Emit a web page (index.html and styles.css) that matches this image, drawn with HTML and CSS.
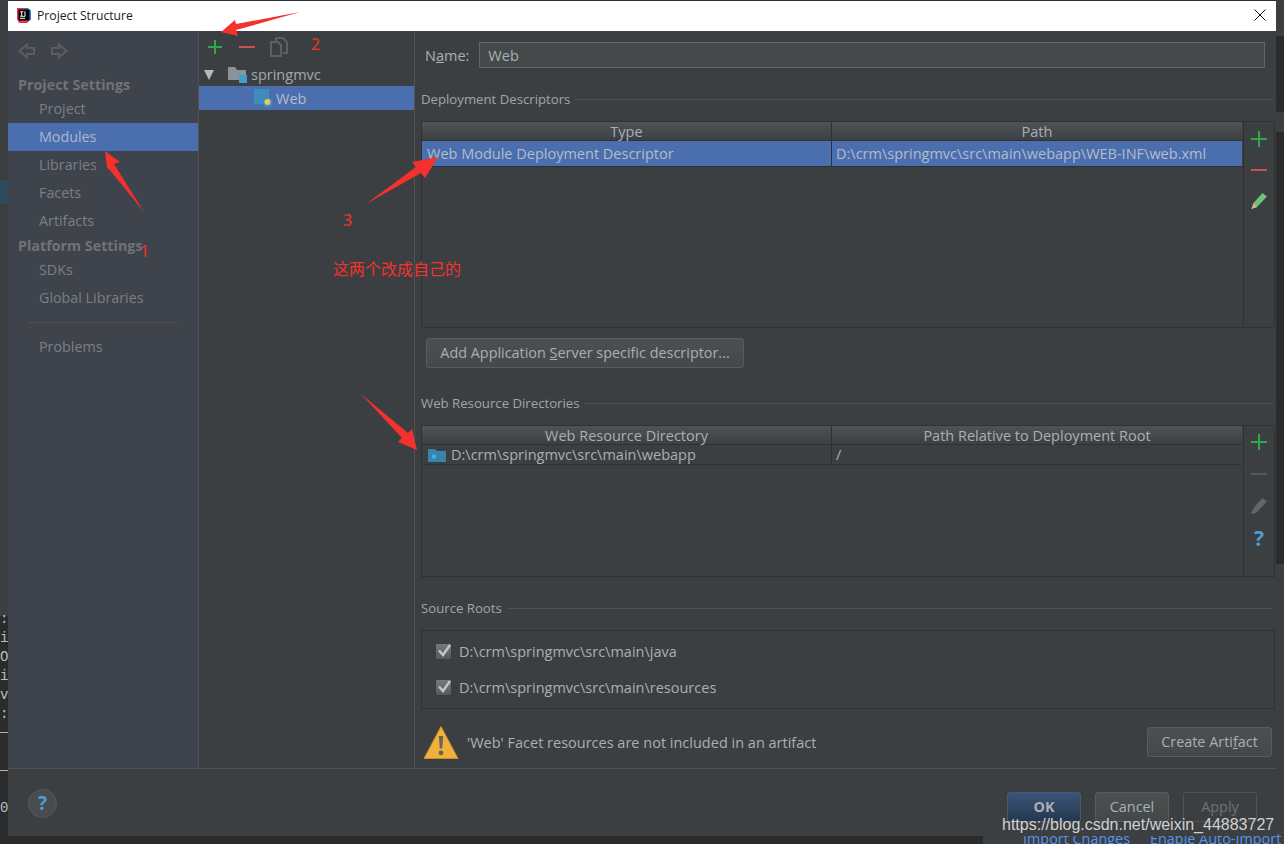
FILE: index.html
```html
<!DOCTYPE html>
<html lang="en">
<head>
<meta charset="utf-8">
<title>Project Structure</title>
<link rel="stylesheet" href="styles.css">
</head>
<body>
<div class="backdrop">
  <div class="strip left-top"></div>
  <div class="strip left-blue"></div>
  <div class="strip right-top"></div>
  <div class="strip right-mid"></div>
  <div class="strip right-low"></div>
  <div class="link-bar"></div>
  <div class="console"><span>:</span><span>i</span><span>O</span><span>i</span><span>v</span><span>:</span><span class="rule"></span><span class="rule second"></span><span class="zero">0</span></div>
  <div class="bg-links"><span>Import Changes</span><span>Enable Auto-Import</span></div>
</div>

<div class="dialog">
  <header class="titlebar">
    <svg class="app-logo" width="16" height="16" viewBox="0 0 16 16"><path d="M1 1h9l5 3v8l-4 4H3l-2-4z" fill="#e8304f"/><path d="M9 1h3l3 3v8l-3 2z" fill="#2b7fe0"/><rect x="2.5" y="2.5" width="11" height="11" fill="#000"/><rect x="4" y="10.8" width="5" height="1" fill="#fff"/><path d="M4.2 4.3h3v1h-1v3.500h1v1h-3v-1h1v-3.500h-1zM8.500 4.300h1v4.400c0 .8-.6 1.200-1.400 1.200h-.7v-1h.7c.3 0 .4-.1.400-.3z" fill="#fff"/></svg>
    <span class="title-text">Project Structure</span>
    <svg class="close-x" width="12" height="12" viewBox="0 0 12 12"><path d="M.5.500l11 11M11.500.500l-11 11" stroke="#111" stroke-width="1" fill="none"/></svg>
  </header>

  <div class="dialog-body">
    <nav class="sidebar">
      <div class="nav-arrows">
        <svg width="18" height="16" viewBox="0 0 18 16"><path d="M9 1.500L1.500 8 9 14.500V11h7V5H9z" fill="none" stroke="#5a5e61" stroke-width="2"/></svg>
        <svg width="18" height="16" viewBox="0 0 18 16"><path d="M9 1.500L16.500 8 9 14.500V11H2V5h7z" fill="none" stroke="#5a5e61" stroke-width="2"/></svg>
      </div>
      <div class="nav-head">Project Settings</div>
      <div class="nav-item">Project</div>
      <div class="nav-item selected">Modules</div>
      <div class="nav-item">Libraries</div>
      <div class="nav-item">Facets</div>
      <div class="nav-item">Artifacts</div>
      <div class="nav-head second">Platform Settings</div>
      <div class="nav-item">SDKs</div>
      <div class="nav-item">Global Libraries</div>
      <div class="nav-sep"></div>
      <div class="nav-item">Problems</div>
    </nav>

    <section class="tree">
      <div class="tree-tools">
        <svg width="16" height="16" viewBox="0 0 16 16"><path d="M8 1v14M1 8h14" stroke="#2ea84a" stroke-width="2"/></svg>
        <svg width="16" height="16" viewBox="0 0 16 16"><path d="M0 8h16" stroke="#c75450" stroke-width="2"/></svg>
        <svg class="copy-icon" width="20" height="20" viewBox="0 0 20 20"><path d="M7 1h7l4 4v11h-4M7 1v3" fill="none" stroke="#5d6063" stroke-width="2"/><path d="M2 5h7l3 3v11H2z" fill="none" stroke="#5d6063" stroke-width="2"/></svg>
      </div>
      <div class="tree-row root">
        <span class="caret"></span>
        <svg class="folder" width="20" height="18" viewBox="0 0 20 18"><path d="M0 1h7l2 3h9v10H0z" fill="#8c9398"/><rect x="11" y="9" width="8" height="8" fill="#3ba0cc"/></svg>
        <span>springmvc</span>
      </div>
      <div class="tree-row web">
        <svg width="19" height="19" viewBox="0 0 19 19"><rect x="0" y="0" width="15" height="15" fill="#3f8cc0"/><circle cx="13.500" cy="13.500" r="5" fill="#3f8cc0"/><circle cx="13.500" cy="13" r="3" fill="#f2c55c"/></svg>
        <span>Web</span>
      </div>
    </section>

    <main class="content">
      <div class="name-row">
        <label class="name-label">N<u>a</u>me:</label>
        <div class="name-input">Web</div>
      </div>

      <div class="group-title first"><span>Deployment Descriptors</span><i></i></div>
      <div class="table-box tall">
        <div class="table-main">
          <div class="thead"><div class="c1">Type</div><div class="c2">Path</div></div>
          <div class="trow selected"><div class="c1">Web Module Deployment Descriptor</div><div class="c2">D:\crm\springmvc\src\main\webapp\WEB-INF\web.xml</div></div>
        </div>
        <div class="table-tools">
          <svg width="16" height="16" viewBox="0 0 16 16"><path d="M8 0v16M0 8h16" stroke="#2ea84a" stroke-width="2"/></svg>
          <svg width="16" height="16" viewBox="0 0 16 16"><path d="M0 8h16" stroke="#c75450" stroke-width="2"/></svg>
          <svg width="16" height="16" viewBox="0 0 16 16"><path d="M11.500 0L16 3.500 5 15 1 14.500 2.500 10z" fill="#6fc07a"/><path d="M2.500 10L1 15.500 5.500 14z" fill="#e8b27a"/><path d="M1 14l-.5 2 2-.6z" fill="#ccc"/></svg>
        </div>
      </div>
      <button class="btn add-server" type="button">Add Application <u>S</u>erver specific descriptor...</button>

      <div class="group-title second"><span>Web Resource Directories</span><i></i></div>
      <div class="table-box short">
        <div class="table-main">
          <div class="thead"><div class="c1">Web Resource Directory</div><div class="c2">Path Relative to Deployment Root</div></div>
          <div class="trow plain"><div class="c1"><svg width="18" height="14" viewBox="0 0 18 14"><path d="M0 1h7l2 2h9v11H0z" fill="#3b83a8"/><circle cx="6" cy="8.500" r="2.200" fill="#38b6e8"/></svg>D:\crm\springmvc\src\main\webapp</div><div class="c2">/</div></div>
        </div>
        <div class="table-tools">
          <svg width="16" height="16" viewBox="0 0 16 16"><path d="M8 0v16M0 8h16" stroke="#2ea84a" stroke-width="2"/></svg>
          <svg width="16" height="16" viewBox="0 0 16 16"><path d="M0 8h16" stroke="#55585a" stroke-width="2"/></svg>
          <svg width="16" height="16" viewBox="0 0 16 16"><path d="M11.500 0L16 3.500 5 15l-5 1 2.500-6z" fill="#636567"/></svg>
          <span class="table-help">?</span>
        </div>
      </div>

      <div class="group-title third"><span>Source Roots</span><i></i></div>
      <div class="roots">
        <div class="root-row"><span class="check"><svg width="14" height="14" viewBox="0 0 14 14"><path d="M2 6.500L6 11 13 1" fill="none" stroke="#c4c6c7" stroke-width="2.400"/></svg></span>D:\crm\springmvc\src\main\java</div>
        <div class="root-row"><span class="check"><svg width="14" height="14" viewBox="0 0 14 14"><path d="M2 6.500L6 11 13 1" fill="none" stroke="#c4c6c7" stroke-width="2.400"/></svg></span>D:\crm\springmvc\src\main\resources</div>
      </div>

      <div class="warn-row">
        <svg width="36" height="35" viewBox="0 0 36 35"><path d="M18 1.500L35 33.500H1z" fill="#f0b13c" stroke="#c88f28" stroke-linejoin="round"/><path d="M15.800 11h4.400l-1 12.500h-2.400zM18 25.500a2.400 2.400 0 1 1 0 4.800 2.400 2.400 0 0 1 0-4.800z" fill="#6b6450"/></svg>
        <span class="warn-text">'Web' Facet resources are not included in an artifact</span>
        <button class="btn create" type="button">Create Arti<u>f</u>act</button>
      </div>
    </main>
  </div>

  <footer class="footer">
    <span class="help-round">?</span>
    <div class="footer-btns">
      <button class="btn ok" type="button">OK</button>
      <button class="btn" type="button">Cancel</button>
      <button class="btn apply" type="button">Apply</button>
    </div>
  </footer>
</div>

<svg class="annot" width="1284" height="844" viewBox="0 0 1284 844">
  <g fill="#f4312d">
    <path d="M300 12L236 24 235 20 221 32 238 36 236 30z"/>
    <path d="M105 151L120 162 114 164 144 212 109 169 107 168z"/>
    <path d="M438 157L425 178 421 173 366 204 416 167 412 162z"/>
    <path d="M417 450L398 442 402 438 361 394 408 433 412 429z"/>
  </g>
</svg>
<div class="note n1">1</div>
<div class="note n2">2</div>
<div class="note n3">3</div>
<div class="note n4">这两个改成自己的</div>
<div class="watermark">https://blog.csdn.net/weixin_44883727</div>
</body>
</html>
```
FILE: styles.css
```css
* { box-sizing: border-box; }
html, body { margin: 0; padding: 0; }
body {
  width: 1284px;
  height: 844px;
  overflow: hidden;
  background: #2b2b2b;
  position: relative;
  font-family: "Open Sans", "Noto Sans", sans-serif;
  font-size: 14.500px;
  color: #a9b0b5;
}
.backdrop { position: absolute; inset: 0; }
.strip { position: absolute; background: #3c3f41; }
.left-top { left: 0; top: 0; width: 8px; height: 616px; }
.left-blue { left: 0; top: 180px; width: 8px; height: 24px; background: #2d4a5f; }
.right-top { left: 1276px; top: 0; width: 8px; height: 36px; }
.right-mid { left: 1276px; top: 112px; width: 8px; height: 20px; }
.right-low { left: 1276px; top: 564px; width: 8px; height: 280px; }
.link-bar { position: absolute; left: 983px; top: 836px; width: 301px; height: 8px; background: #3c3f41; }
.console span {
  position: absolute;
  left: 0;
  width: 8px;
  overflow: hidden;
  font: 14px/14px "Liberation Mono", monospace;
  color: #b9bdc0;
}
.console span:nth-child(1) { top: 612px; }
.console span:nth-child(2) { top: 631px; }
.console span:nth-child(3) { top: 650px; }
.console span:nth-child(4) { top: 669px; }
.console span:nth-child(5) { top: 688px; }
.console span:nth-child(6) { top: 707px; }
.console .rule { top: 732px !important; height: 1px; background: #b0b0b0; }
.console .rule.second { top: 770px !important; }
.console .zero { top: 801px !important; }
.bg-links {
  position: absolute;
  left: 1023px;
  top: 829px;
  display: flex;
  gap: 20px;
  color: #5394ec;
  font-size: 14.400px;
  white-space: nowrap;
}
.dialog {
  position: absolute;
  left: 8px;
  top: 1px;
  width: 1268px;
  height: 835px;
  background: #3c3f41;
  display: flex;
  flex-direction: column;
}
.titlebar {
  height: 30px;
  flex: none;
  background: #fff;
  display: flex;
  align-items: center;
  padding: 0 10px 2px 8px;
  color: #222;
}
.title-text { margin-left: 5px; font-size: 12.200px; }
.close-x { margin-left: auto; }
.dialog-body { flex: 1; display: flex; min-height: 0; }
.sidebar {
  width: 191px;
  flex: none;
  background: #3f434b;
  border-right: 1px solid #505254;
  font-size: 14.300px;
}
.nav-arrows { display: flex; gap: 14px; padding: 12px 0 0 10px; height: 44px; }
.nav-head { font-weight: 700; color: #6f7377; height: 20px; line-height: 20px; padding-left: 10px; }
.nav-head.second { height: 21px; line-height: 21px; }
.nav-item { height: 28px; line-height: 28px; padding-left: 31px; color: #7b8085; }
.nav-item.selected { background: #4b6eaf; color: #a9b8cb; }
.nav-sep { height: 1px; background: #4d5054; margin: 10px 20px; }
.tree {
  width: 216px;
  flex: none;
  border-right: 1px solid #505254;
}
.tree-tools { height: 32px; display: flex; align-items: center; gap: 16px; padding-left: 8px; }
.copy-icon { margin-left: -2px; }
.tree-row { height: 24px; display: flex; align-items: center; }
.tree-row.root { height: 23px; padding-left: 5px; color: #a3a8ac; }
.tree-row.root .folder { margin: 0 3px 0 14px; }
.caret { width: 0; height: 0; border-left: 5px solid transparent; border-right: 5px solid transparent; border-top: 10px solid #b5b8ba; }
.tree-row.web { background: #4b6eaf; color: #b4bcc8; padding-left: 55px; gap: 3px; }
.content { flex: 1; min-width: 0; padding: 11px 1px 0 6px; }
.name-row { display: flex; align-items: center; gap: 10px; height: 26px; padding-left: 4px; }
.name-input {
  width: 786px;
  height: 26px;
  line-height: 25px;
  padding-left: 8px;
  background: #45494a;
  border: 1px solid #646464;
  color: #a9b0b5;
}
.group-title { display: flex; align-items: center; gap: 5px; height: 20px; font-size: 13.200px; color: #a0a5a9; }
.group-title i { flex: 1; height: 1px; background: #4f5254; margin-right: 2px; }
.group-title.first { margin-top: 21px; }
.group-title.second { margin-top: 25px; }
.group-title.third { margin-top: 21px; }
.table-box { display: flex; border: 1px solid #2f3234; margin-top: 12px; }
.table-box.tall { height: 207px; }
.table-box.short { height: 152px; }
.table-main { flex: 1; min-width: 0; }
.thead {
  display: grid;
  grid-template-columns: 409px 411px;
  height: 19px;
  background: linear-gradient(#505355, #3d4042);
  border-bottom: 1px solid #2f3234;
  color: #a9b0b5;
}
.thead div { text-align: center; line-height: 20px; }
.thead .c2 { border-left: 1px solid #2f3234; }
.trow { display: grid; grid-template-columns: 409px 411px; height: 26px; line-height: 25px; border-bottom: 1px solid #2f3234; }
.trow.plain { height: 20px; line-height: 19px; }
.trow.plain .c1 { display: flex; align-items: center; gap: 5px; }
.trow .c1 { padding-left: 6px; white-space: nowrap; }
.trow .c2 { padding-left: 4px; border-left: 1px solid #2f3234; white-space: nowrap; }
.trow.selected .c1 { padding-left: 5px; }
.trow.selected { background: #4b6eaf; color: #b4bcc8; border-bottom-color: #2b2d2f; }
.table-tools {
  width: 31px;
  flex: none;
  border-left: 1px solid #2f3234;
  display: flex;
  flex-direction: column;
  align-items: center;
  padding-top: 8px;
  gap: 16px;
  margin-left: 1px;
}
.tall .table-tools { gap: 15px; padding-top: 9px; }
.table-help { color: #4b9fd5; font-weight: 700; font-size: 21px; line-height: 16px; }
.btn {
  font-family: inherit;
  font-size: 14.400px;
  color: #a9b0b5;
  height: 30px;
  background: linear-gradient(#4c5051, #44484a);
  border: 1px solid #5a5d5f;
  border-radius: 3px;
  padding: 0 0 2px;
}
.add-server { width: 318px; margin: 10px 0 0 5px; display: block; }
.roots { border: 1px solid #2f3234; height: 79px; margin-top: 12px; padding: 2px 0 0 13px; }
.root-row { display: flex; align-items: center; height: 36px; gap: 7px; color: #a9b0b5; }
.check {
  width: 17px;
  height: 17px;
  background: linear-gradient(#77797b, #56595b);
  border: 1px solid #3a3c3e;
  border-radius: 2px;
  display: flex;
  align-items: center;
  justify-content: center;
}
.warn-row { display: flex; align-items: center; height: 38px; margin-top: 14px; padding-left: 2px; }
.warn-text { margin-left: 8px; }
.create { width: 125px; margin-left: auto; margin-right: 3px; }
.footer {
  height: 68px;
  flex: none;
  border-top: 1px solid #505254;
  display: flex;
  align-items: flex-start;
  justify-content: space-between;
  padding: 20px 19px 0 20px;
}
.help-round {
  width: 29px;
  height: 29px;
  border-radius: 50%;
  background: #484c4e;
  border: 1px solid #55595b;
  color: #4b9fd5;
  font-weight: 700;
  font-size: 19px;
  line-height: 26px;
  text-align: center;
}
.footer-btns { display: flex; gap: 14px; padding-top: 3px; }
.footer-btns .btn { width: 74px; }
.btn.ok { background: linear-gradient(#3a5579, #26374f); border-color: #4a5a6e; font-weight: 700; }
.btn.apply { background: transparent; color: #6f7376; border-color: #505355; }
.annot { position: absolute; left: 0; top: 0; pointer-events: none; }
.note { position: absolute; color: #f4312d; font-family: "Noto Sans", sans-serif; font-size: 16px; line-height: 18px; }
.n1 { left: 140px; top: 242px; }
.n2 { left: 311px; top: 35px; }
.n3 { left: 343px; top: 211px; }
.n4 { left: 333px; top: 259px; font-family: "Noto Sans CJK SC", sans-serif; }
.watermark {
  position: absolute;
  left: 1002px;
  top: 815px;
  font-family: "Liberation Sans", sans-serif;
  font-size: 16px;
  line-height: 20px;
  color: #d0d1d1;
  white-space: nowrap;
}
```
